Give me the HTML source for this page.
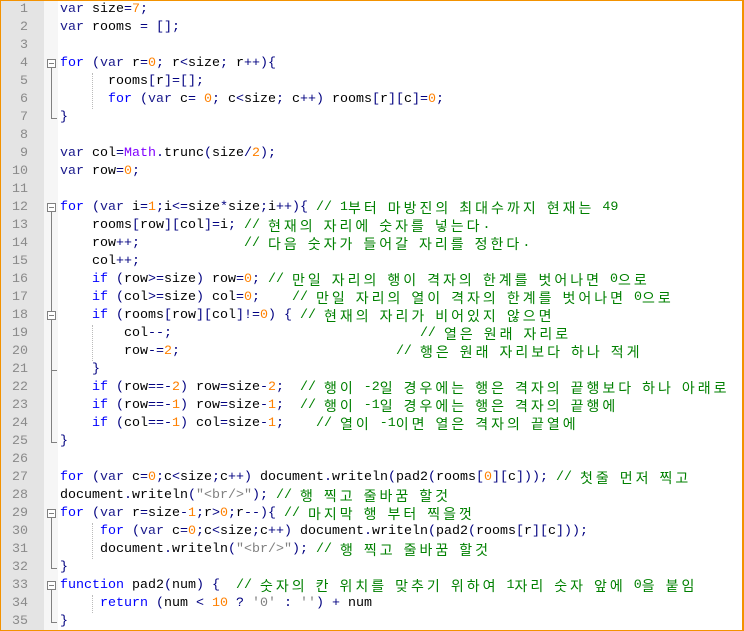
<!DOCTYPE html>
<html><head><meta charset="utf-8">
<style>
html,body{margin:0;padding:0;}
body{width:744px;height:631px;position:relative;overflow:hidden;background:#fff;}
#frame{position:absolute;left:0;top:0;width:741px;height:629px;border:1px solid #f39200;border-right-width:2px;}
#gut{position:absolute;left:1px;top:1px;width:43px;height:629px;background:#e4e4e4;}
#fold{position:absolute;left:44px;top:1px;width:14px;height:629px;background:#f6f6f6;}
.ln{position:absolute;left:1px;width:27px;text-align:right;color:#8a8a8a;font:13.33px "Liberation Mono",monospace;line-height:18px;height:18px;}
.cl{position:absolute;left:60px;white-space:pre;font:13.33px "Liberation Mono",monospace;line-height:18px;height:18px;color:#000;overflow:visible;}
.k{display:inline-block;height:18px;vertical-align:top;font-family:"Noto Sans CJK KR","NanumGothic",sans-serif;font-size:14px;letter-spacing:3px;line-height:18px;}
.kw{color:#0000ff}.ty{color:#1a1a8c}.nu{color:#ff8000}.op{color:#000080}.cm{color:#008000}.st{color:#808080}.ma{color:#8000ff}
.vl{position:absolute;left:51px;width:1px;background:#808080;}
.box{position:absolute;left:47px;width:9px;height:9px;border:1px solid #808080;background:#fff;box-sizing:border-box;}
.box:after{content:"";position:absolute;left:1px;top:3px;width:5px;height:1px;background:#808080;}
.tk{position:absolute;left:51px;height:1px;width:6px;background:#808080;}
.ig{position:absolute;width:0;border-left:1px dotted #bbb;}
</style></head><body>
<div id="frame"></div>
<div id="gut"></div>
<div id="fold"></div>
<div id="code">
<div class="cl">var size=7;</div>
<div class="cl">var rooms = [];</div>
<div class="cl"></div>
<div class="cl">for (var r=0; r&lt;size; r++){</div>
<div class="cl">      rooms[r]=[];</div>
<div class="cl">      for (var c= 0; c&lt;size; c++) rooms[r][c]=0;</div>
<div class="cl">}</div>
<div class="cl"></div>
<div class="cl">var col=Math.trunc(size/2);</div>
<div class="cl">var row=0;</div>
<div class="cl"></div>
<div class="cl">for (var i=1;i&lt;=size*size;i++){ // 1부터 마방진의 최대수까지 현재는 49</div>
<div class="cl">    rooms[row][col]=i; // 현재의 자리에 숫자를 넣는다.</div>
<div class="cl">    row++;             // 다음 숫자가 들어갈 자리를 정한다.</div>
<div class="cl">    col++;</div>
<div class="cl">    if (row>=size) row=0; // 만일 자리의 행이 격자의 한계를 벗어나면 0으로</div>
<div class="cl">    if (col>=size) col=0;    // 만일 자리의 열이 격자의 한계를 벗어나면 0으로</div>
<div class="cl">    if (rooms[row][col]!=0) { // 현재의 자리가 비어있지 않으면</div>
<div class="cl">        col--;                               // 열은 원래 자리로</div>
<div class="cl">        row-=2;                           // 행은 원래 자리보다 하나 적게</div>
<div class="cl">    }</div>
<div class="cl">    if (row==-2) row=size-2;  // 행이 -2일 경우에는 행은 격자의 끝행보다 하나 아래로</div>
<div class="cl">    if (row==-1) row=size-1;  // 행이 -1일 경우에는 행은 격자의 끝행에</div>
<div class="cl">    if (col==-1) col=size-1;    // 열이 -1이면 열은 격자의 끝열에</div>
<div class="cl">}</div>
<div class="cl"></div>
<div class="cl">for (var c=0;c&lt;size;c++) document.writeln(pad2(rooms[0][c])); // 첫줄 먼저 찍고</div>
<div class="cl">document.writeln("&lt;br/>"); // 행 찍고 줄바꿈 할것</div>
<div class="cl">for (var r=size-1;r>0;r--){ // 마지막 행 부터 찍을껏</div>
<div class="cl">     for (var c=0;c&lt;size;c++) document.writeln(pad2(rooms[r][c]));</div>
<div class="cl">     document.writeln("&lt;br/>"); // 행 찍고 줄바꿈 할것</div>
<div class="cl">}</div>
<div class="cl">function pad2(num) {  // 숫자의 칸 위치를 맞추기 위하여 1자리 숫자 앞에 0을 붙임</div>
<div class="cl">     return (num &lt; 10 ? '0' : '') + num</div>
<div class="cl">}</div>
</div>
<div id="gl"></div>
<script>
(function(){
var lines=document.querySelectorAll('#code .cl');
var T=function(n){return 1+(n-1)*18;};
function esc(s){return s.replace(/&/g,'&amp;').replace(/</g,'&lt;').replace(/>/g,'&gt;');}
function kor(s){return s.replace(/[\uAC00-\uD7A3]+/g,function(m){return '<span class="k">'+m+'</span>';});}
var re=/(\/\/.*$)|("[^"]*"|'[^']*')|(\b\d+\b)|(\b(?:for|if|function|return)\b)|(\bvar\b)|(\bMath\b)|([A-Za-z_]\w*)|([^\w\s"'])|(\s+)/g;
var gl='';
for(var i=0;i<lines.length;i++){
  var el=lines[i],t=el.textContent,out='';
  el.style.top=T(i+1)+'px';
  t.replace(re,function(m,c,s,n,k,v,ma,id,op,sp){
    if(c)out+='<span class="cm">'+kor(esc(c))+'</span>';
    else if(s)out+='<span class="st">'+esc(s)+'</span>';
    else if(n)out+='<span class="nu">'+n+'</span>';
    else if(k)out+='<span class="kw">'+k+'</span>';
    else if(v)out+='<span class="ty">'+v+'</span>';
    else if(ma)out+='<span class="ma">'+ma+'</span>';
    else if(id)out+=id;
    else if(op)out+='<span class="op">'+esc(op)+'</span>';
    else out+=sp;
    return '';
  });
  el.innerHTML=out;
  gl+='<div class="ln" style="top:'+T(i+1)+'px">'+(i+1)+'</div>';
}
function fold(a,b){
  gl+='<div class="vl" style="top:'+(T(a)+13)+'px;height:'+(T(b)+9-(T(a)+13))+'px"></div>';
  gl+='<div class="box" style="top:'+(T(a)+4)+'px"></div>';
  gl+='<div class="tk" style="top:'+(T(b)+9)+'px"></div>';
}
fold(4,7);fold(12,25);fold(29,32);fold(33,35);
gl+='<div class="box" style="top:'+(T(18)+4)+'px"></div>';
gl+='<div class="tk" style="top:'+(T(21)+9)+'px"></div>';
function ig(x,a,b){gl+='<div class="ig" style="left:'+x+'px;top:'+T(a)+'px;height:'+(T(b+1)-T(a))+'px"></div>';}
ig(92,5,6);ig(92,19,20);ig(92,30,31);ig(92,34,34);
document.getElementById('gl').innerHTML=gl;
})();
</script>
</body></html>
